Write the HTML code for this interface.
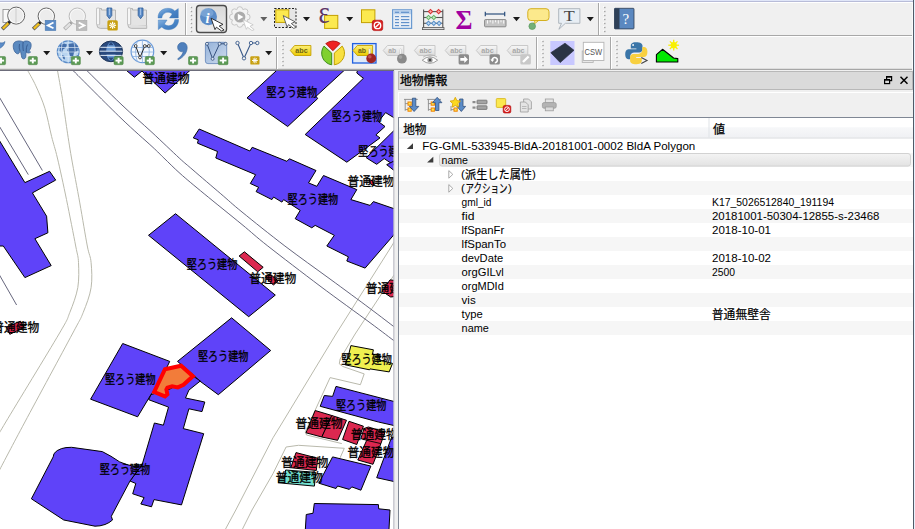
<!DOCTYPE html>
<html><head><meta charset="utf-8"><title>QGIS</title>
<style>
html,body{margin:0;padding:0;background:#f0f0f0;}
body{width:915px;height:529px;overflow:hidden;position:relative;font-family:"Liberation Sans",sans-serif;}
svg{position:absolute;left:0;top:0;display:block}
svg{font-family:"Liberation Sans",sans-serif;}
.serif{font-family:"Liberation Serif",serif;}
.jp{font-family:"Liberation Sans","Noto Sans CJK JP",sans-serif;}
</style></head><body>
<svg width="915" height="529" viewBox="0 0 915 529">
<defs><clipPath id="mapclip"><rect x="0" y="70.5" width="393.5" height="460"/></clipPath></defs>
<rect x="0" y="70" width="394" height="459" fill="#fff"/>
<g clip-path="url(#mapclip)">
<path d="M27.4,70 C28.8,72.6 32.9,79.4 35.8,85.8 C38.7,92.2 42.3,99.8 44.9,108.3 C47.5,116.8 49.5,128.2 51.6,136.5 C53.7,144.8 54.9,147.5 57.4,158 C59.9,168.5 63.5,184.9 66.5,199.6 C69.5,214.3 73.7,235.5 75.7,246 C77.7,256.5 78.2,255.7 78.5,262.6 C78.8,269.5 79.2,279.3 77.8,287.6 C76.3,295.9 72.9,304.8 69.8,312.5 C66.7,320.2 69.7,315.8 59,334 C48.3,352.2 15.8,405.3 5.8,422 C-4.2,438.7 0.1,432.0 -1,434" fill="none" stroke="#b9b9ac" stroke-width="1"/>
<path d="M57.4,70 C58.2,74.7 60.9,88.9 62.4,98.3 C63.9,107.7 65.0,116.5 66.5,126.5 C68.0,136.4 69.3,145.3 71.5,158 C73.7,170.7 77.2,188.2 79.8,202.9 C82.4,217.6 85.4,236.1 87.3,246 C89.2,255.9 90.5,255.7 91.1,262.6 C91.7,269.5 92.4,279.3 91.1,287.6 C89.8,295.9 86.3,304.8 83.2,312.5 C80.1,320.2 82.0,315.8 72.3,334 C62.6,352.2 37.1,399.2 24.9,422 C12.7,444.8 3.3,462.8 -1,471" fill="none" stroke="#b9b9ac" stroke-width="1"/>
<polyline points="395,240.5 391.7,246 336,334 282.7,422 273,437.8 235.8,510 225,530" fill="none" stroke="#b9b9ac" stroke-width="1"/>
<polyline points="395,273.5 355.1,334 340.1,359 339.3,363.9 342.6,366.4 364.2,373.9 360.4,384.7 330.1,377.6 305.2,432 306.5,435 341.8,443.6" fill="none" stroke="#b9b9ac" stroke-width="1"/>
<polyline points="340.1,457.8 344.3,448.3 298.5,445.3 286.1,447 273,473.6 252,510 242,530" fill="none" stroke="#b9b9ac" stroke-width="1"/>
<path d="M71.5,69 C79.8,77.2 107.6,105.3 121,118.2 C134.4,131.1 144.8,139.9 152,146.5 C159.2,153.1 159.2,153.5 163.9,158 C168.6,162.5 173.3,167.4 180,173.4 C186.7,179.4 193.9,185.3 204.2,193.8 C214.5,202.3 231.4,215.8 242,224.5 C252.6,233.2 254.8,235.8 267.8,246 C280.8,256.2 303.0,273.2 320,286 C337.0,298.8 357.5,313.4 370,322.7 C382.5,331.9 390.8,338.4 395,341.5" fill="none" stroke="#55556e" stroke-width="0.9"/>
<path d="M85.3,69 C91.2,74.8 109.9,93.5 121,104.1 C132.1,114.7 142.3,123.4 152,132.4 C161.7,141.4 172.4,151.7 179.2,158 C186.0,164.3 186.1,164.0 193,170 C199.9,176.0 212.6,186.8 220.8,193.8 C229.0,200.8 231.3,203.3 242,212 C252.7,220.7 270.2,234.8 284.9,246 C299.6,257.2 315.8,268.6 330,279 C344.2,289.4 359.2,300.4 370,308.5 C380.8,316.6 390.8,324.3 395,327.5" fill="none" stroke="#55556e" stroke-width="0.9"/>
<polyline points="-1,96.6 42.4,170.5" fill="none" stroke="#55556e" stroke-width="0.9"/>
<polyline points="-1,125.7 28.3,174.6" fill="none" stroke="#55556e" stroke-width="0.9"/>
<polyline points="-1,274.2 16.6,305" fill="none" stroke="#55556e" stroke-width="0.9"/>
<polygon points="120,65 134.4,77.2 142,71 165.1,93 196,65" fill="#5f43f9" stroke="#000" stroke-width="1.0" stroke-linejoin="miter" />
<polygon points="-2,138.2 24.9,182.6 49.6,171.3 55.7,180.1 32.4,192.9 46.6,216.2 47.9,232.8 34.9,238.7 51.2,265.6 24.9,277.6 3.3,246 -2,246" fill="#5f43f9" stroke="#000" stroke-width="1.0" stroke-linejoin="miter" />
<polygon points="199.2,129 249.9,151 252.2,147.3 286.9,161.3 289.4,158.8 316,170.5 308.5,182.9 316.8,186.3 323.5,175.5 356.8,189.6 350.9,199.6 370.1,205.4 373.4,201.6 395,209 395,233.5 384.2,246 365.1,268.1 346.8,261 348.4,256.8 326.8,246 334.3,235.3 315.2,225.4 311.8,227.8 295.2,218.7 300.2,210.4 283.6,199.6 281.9,202.1 273.6,197.1 271.9,199.6 256.1,191.6 258.6,187.3 250.3,183.5 255.6,174.7 215.8,158 217.5,151.5 197.5,143.2 198.3,139.8 193.3,137.9" fill="#5f43f9" stroke="#000" stroke-width="1.0" stroke-linejoin="miter" />
<polygon points="281.4,66 247,97.9 287.7,126.5 317.7,98.6 316,96.3 349,66" fill="#5f43f9" stroke="#000" stroke-width="1.0" stroke-linejoin="miter" />
<polygon points="358.6,66 356.8,73 363.4,78.3 305.2,134.5 346.8,162.2 380,137.9 375.9,134.9 385,126.5 378.4,121.6 385.6,112.6 396,119 396,66" fill="#5f43f9" stroke="#000" stroke-width="1.0" stroke-linejoin="miter" />
<polygon points="396,128.5 366.3,157.8 376.7,164.3 384.2,158.6 396,166.5" fill="#5f43f9" stroke="#000" stroke-width="1.0" stroke-linejoin="miter" />
<polygon points="386.7,164.7 396,172 396,160" fill="#5f43f9" stroke="#000" stroke-width="1.0" stroke-linejoin="miter" />
<polygon points="175.5,213.7 275.3,295.1 248.7,316.7 148.5,235.3" fill="#5f43f9" stroke="#000" stroke-width="1.0" stroke-linejoin="miter" />
<polygon points="239.1,256 244.4,251.8 263.2,267.3 257.7,271.8" fill="#dc2850" stroke="#000" stroke-width="1.0" stroke-linejoin="miter" />
<polygon points="265.5,277.2 270.1,273.9 278,280.9 273.4,285.1" fill="#dc2850" stroke="#000" stroke-width="1.0" stroke-linejoin="miter" />
<polygon points="382.2,291.3 390,279.9 396,280.6 396,296.4 390.7,297" fill="#dc2850" stroke="#000" stroke-width="1.0" stroke-linejoin="miter" />
<polygon points="369.2,179.6 373,181 374.2,185.4 371,184.5" fill="#dc2850" stroke="#000" stroke-width="1.0" stroke-linejoin="miter" />
<polygon points="6.6,327.1 20.3,321.2 24.3,327.4 9.8,334.3" fill="#dc2850" stroke="#000" stroke-width="1.0" stroke-linejoin="miter" />
<polygon points="231.6,317.8 270.7,350.5 218.3,394.7 199.2,380.6 194.2,375.6 177.5,361.4" fill="#5f43f9" stroke="#000" stroke-width="1.0" stroke-linejoin="miter" />
<polygon points="122.7,343.5 169.7,361.4 168,365 165,371 153,392 150.9,394.7 137.6,416.8 90.6,399.2" fill="#5f43f9" stroke="#000" stroke-width="1.0" stroke-linejoin="miter" />
<polygon points="151,394.6 148.7,399.7 168.5,407.1 163.4,425.2 154.4,423 142.2,464.4 130,481 135.8,483.5 132.7,493.8 144.1,497.6 140.8,504 151.5,506.8 154,499.6 181.5,504.9 203.7,433.7 183.3,428.6 188.9,408.8 202,411.6 204.8,402 185.5,398 188.9,390.1 200.3,381 193,376 170,389" fill="#5f43f9" stroke="#000" stroke-width="1.0" stroke-linejoin="miter" />
<polygon points="53.2,456.9 54,453.6 57.2,450.6 61.5,448.6 66,447.6 71.5,447.3 102.3,451.6 111,456.3 119.7,461.9 126.5,464.5 133,466.1 142.2,464.4 130,481 111.3,516.3 112.5,520 109,522.6 105,524.5 100,525.8 95,526.2 63.75,520 31.4,498.8" fill="#5f43f9" stroke="#000" stroke-width="1.0" stroke-linejoin="miter" />
<polygon points="165,369.2 181.1,365.7 192.9,376.3 183.5,384.8 177.8,387.4 172.1,386.2 167.4,387.6 166.4,389.5 167.4,394.2 165,396.4 154.2,392" fill="#f27c3a" stroke="#ff0000" stroke-width="4" stroke-linejoin="miter" stroke-linejoin="round"/>
<polygon points="350.9,345.6 373.4,349.8 372.5,354 380,356 379,360 392.5,363.4 389.2,371.9 370,368.9 369.5,369.8 345.1,364.8 348.4,355.6" fill="#f0f050" stroke="#000" stroke-width="1.0" stroke-linejoin="miter" />
<polygon points="336,386.4 396,402 396,426 378.4,422 320.2,406.3 324.3,395.5 332.6,396.4" fill="#5f43f9" stroke="#000" stroke-width="1.0" stroke-linejoin="miter" />
<polygon points="315.2,410.5 331.8,415.5 321.8,437 306,432.8" fill="#dc2850" stroke="#000" stroke-width="1.0" stroke-linejoin="miter" />
<polygon points="331.8,415.5 346.5,420.3 337.6,440.3 321.8,437" fill="#dc2850" stroke="#000" stroke-width="1.0" stroke-linejoin="miter" />
<polygon points="349,421.3 363.4,426.2 356.8,444.5 342.6,439.5" fill="#dc2850" stroke="#000" stroke-width="1.0" stroke-linejoin="miter" />
<polygon points="368.4,427 385,432 380.9,443.6 373,464.3 357.8,460 366.7,440.3 360.9,438.6 364,428.5" fill="#dc2850" stroke="#000" stroke-width="1.0" stroke-linejoin="miter" />
<polyline points="380.9,443.6 366.7,440.3" fill="none" stroke="#000" stroke-width="0.9"/>
<polygon points="296,452.6 317.7,458.2 316.3,470.5 290.8,467.7" fill="#dc2850" stroke="#000" stroke-width="1.0" stroke-linejoin="miter" />
<polygon points="285.6,470 315.8,472.4 314.4,486.1 278.5,482.8 279.5,478 284.5,478.5" fill="#70e0d0" stroke="#000" stroke-width="1.0" stroke-linejoin="miter" />
<polygon points="332.6,456.9 370.9,466.1 360.9,490.2 351.8,486.9 349.3,489.4 337.6,486 336,488.5 318.8,483.2" fill="#5f43f9" stroke="#000" stroke-width="1.0" stroke-linejoin="miter" />
<polygon points="391.7,437 396,438 396,482 376.7,477.7" fill="#5f43f9" stroke="#000" stroke-width="1.0" stroke-linejoin="miter" />
<polygon points="314.3,503.5 378.4,504.6 378.7,508.8 390,510 388.7,535 305,535 306.25,514.5 313,513.25" fill="#5f43f9" stroke="#000" stroke-width="1.0" stroke-linejoin="miter" />
<g class="jp" font-size="12" fill="#000" stroke="#000" stroke-width="0.3">
<text x="142.5" y="83.08" textLength="47" lengthAdjust="spacingAndGlyphs">普通建物</text>
<text x="266.5" y="96.68" textLength="50.5" lengthAdjust="spacingAndGlyphs">堅ろう建物</text>
<text x="331.7" y="121.08" textLength="50.5" lengthAdjust="spacingAndGlyphs">堅ろう建物</text>
<text x="358.3" y="155.78" textLength="50.5" lengthAdjust="spacingAndGlyphs">堅ろう建物</text>
<text x="347.5" y="186.38" textLength="47" lengthAdjust="spacingAndGlyphs">普通建物</text>
<text x="287.6" y="203.68" textLength="50.5" lengthAdjust="spacingAndGlyphs">堅ろう建物</text>
<text x="186.8" y="269.28" textLength="50.5" lengthAdjust="spacingAndGlyphs">堅ろう建物</text>
<text x="249.3" y="283.48" textLength="47" lengthAdjust="spacingAndGlyphs">普通建物</text>
<text x="365.8" y="293.48" textLength="47" lengthAdjust="spacingAndGlyphs">普通建物</text>
<text x="-7.8" y="332.08" textLength="47" lengthAdjust="spacingAndGlyphs">普通建物</text>
<text x="105" y="384.28" textLength="50.5" lengthAdjust="spacingAndGlyphs">堅ろう建物</text>
<text x="197.9" y="361.08" textLength="50.5" lengthAdjust="spacingAndGlyphs">堅ろう建物</text>
<text x="341.3" y="364.28" textLength="50.5" lengthAdjust="spacingAndGlyphs">堅ろう建物</text>
<text x="335.9" y="410.48" textLength="50.5" lengthAdjust="spacingAndGlyphs">堅ろう建物</text>
<text x="295.4" y="428.28" textLength="47" lengthAdjust="spacingAndGlyphs">普通建物</text>
<text x="350.8" y="439.48" textLength="47" lengthAdjust="spacingAndGlyphs">普通建物</text>
<text x="347.5" y="456.98" textLength="47" lengthAdjust="spacingAndGlyphs">普通建物</text>
<text x="281.3" y="467.28" textLength="47" lengthAdjust="spacingAndGlyphs">普通建物</text>
<text x="275.7" y="482.48" textLength="47" lengthAdjust="spacingAndGlyphs">普通建物</text>
<text x="99.7" y="474.28" textLength="50.5" lengthAdjust="spacingAndGlyphs">堅ろう建物</text>
</g>
</g>
<rect x="393.5" y="70.5" width="1" height="460" fill="#9a9aa8"/>
<rect x="0" y="0" width="915" height="70" fill="#f0f0f0"/>
<rect x="394.5" y="70" width="521" height="459" fill="#f0f0f0"/>
<rect x="0" y="0" width="915" height="1" fill="#e0e6f8"/>
<rect x="0" y="1" width="915" height="1" fill="#b8bcd8"/>
<rect x="0" y="2" width="915" height="1" fill="#fff"/>
<rect x="0" y="35" width="913" height="1" fill="#a8a8a8"/><rect x="0" y="36" width="913" height="1" fill="#fff"/>
<rect x="0" y="68" width="913" height="1" fill="#dedede"/><rect x="0" y="69" width="913" height="1" fill="#a6a6a6"/><rect x="0" y="70" width="394" height="1" fill="#6c6c7a"/>
<rect x="185" y="3" width="1" height="32" fill="#a8a8a8"/><rect x="186" y="3" width="1" height="32" fill="#fff"/>
<rect x="190" y="6" width="1.4" height="1.4" fill="#fff"/><rect x="190.8" y="6.8" width="1.4" height="1.4" fill="#a0a0a0"/><rect x="190" y="10" width="1.4" height="1.4" fill="#fff"/><rect x="190.8" y="10.8" width="1.4" height="1.4" fill="#a0a0a0"/><rect x="190" y="14" width="1.4" height="1.4" fill="#fff"/><rect x="190.8" y="14.8" width="1.4" height="1.4" fill="#a0a0a0"/><rect x="190" y="18" width="1.4" height="1.4" fill="#fff"/><rect x="190.8" y="18.8" width="1.4" height="1.4" fill="#a0a0a0"/><rect x="190" y="22" width="1.4" height="1.4" fill="#fff"/><rect x="190.8" y="22.8" width="1.4" height="1.4" fill="#a0a0a0"/><rect x="190" y="26" width="1.4" height="1.4" fill="#fff"/><rect x="190.8" y="26.8" width="1.4" height="1.4" fill="#a0a0a0"/><rect x="190" y="30" width="1.4" height="1.4" fill="#fff"/><rect x="190.8" y="30.8" width="1.4" height="1.4" fill="#a0a0a0"/>
<rect x="598" y="3" width="1" height="32" fill="#a8a8a8"/><rect x="599" y="3" width="1" height="32" fill="#fff"/>
<rect x="603.3" y="6" width="1.4" height="1.4" fill="#fff"/><rect x="604.0999999999999" y="6.8" width="1.4" height="1.4" fill="#a0a0a0"/><rect x="603.3" y="10" width="1.4" height="1.4" fill="#fff"/><rect x="604.0999999999999" y="10.8" width="1.4" height="1.4" fill="#a0a0a0"/><rect x="603.3" y="14" width="1.4" height="1.4" fill="#fff"/><rect x="604.0999999999999" y="14.8" width="1.4" height="1.4" fill="#a0a0a0"/><rect x="603.3" y="18" width="1.4" height="1.4" fill="#fff"/><rect x="604.0999999999999" y="18.8" width="1.4" height="1.4" fill="#a0a0a0"/><rect x="603.3" y="22" width="1.4" height="1.4" fill="#fff"/><rect x="604.0999999999999" y="22.8" width="1.4" height="1.4" fill="#a0a0a0"/><rect x="603.3" y="26" width="1.4" height="1.4" fill="#fff"/><rect x="604.0999999999999" y="26.8" width="1.4" height="1.4" fill="#a0a0a0"/><rect x="603.3" y="30" width="1.4" height="1.4" fill="#fff"/><rect x="604.0999999999999" y="30.8" width="1.4" height="1.4" fill="#a0a0a0"/>
<rect x="276" y="37" width="1" height="32" fill="#a8a8a8"/><rect x="277" y="37" width="1" height="32" fill="#fff"/>
<rect x="281.5" y="40" width="1.4" height="1.4" fill="#fff"/><rect x="282.3" y="40.8" width="1.4" height="1.4" fill="#a0a0a0"/><rect x="281.5" y="44" width="1.4" height="1.4" fill="#fff"/><rect x="282.3" y="44.8" width="1.4" height="1.4" fill="#a0a0a0"/><rect x="281.5" y="48" width="1.4" height="1.4" fill="#fff"/><rect x="282.3" y="48.8" width="1.4" height="1.4" fill="#a0a0a0"/><rect x="281.5" y="52" width="1.4" height="1.4" fill="#fff"/><rect x="282.3" y="52.8" width="1.4" height="1.4" fill="#a0a0a0"/><rect x="281.5" y="56" width="1.4" height="1.4" fill="#fff"/><rect x="282.3" y="56.8" width="1.4" height="1.4" fill="#a0a0a0"/><rect x="281.5" y="60" width="1.4" height="1.4" fill="#fff"/><rect x="282.3" y="60.8" width="1.4" height="1.4" fill="#a0a0a0"/><rect x="281.5" y="64" width="1.4" height="1.4" fill="#fff"/><rect x="282.3" y="64.8" width="1.4" height="1.4" fill="#a0a0a0"/>
<rect x="536" y="37" width="1" height="32" fill="#a8a8a8"/><rect x="537" y="37" width="1" height="32" fill="#fff"/>
<rect x="541.5" y="40" width="1.4" height="1.4" fill="#fff"/><rect x="542.3" y="40.8" width="1.4" height="1.4" fill="#a0a0a0"/><rect x="541.5" y="44" width="1.4" height="1.4" fill="#fff"/><rect x="542.3" y="44.8" width="1.4" height="1.4" fill="#a0a0a0"/><rect x="541.5" y="48" width="1.4" height="1.4" fill="#fff"/><rect x="542.3" y="48.8" width="1.4" height="1.4" fill="#a0a0a0"/><rect x="541.5" y="52" width="1.4" height="1.4" fill="#fff"/><rect x="542.3" y="52.8" width="1.4" height="1.4" fill="#a0a0a0"/><rect x="541.5" y="56" width="1.4" height="1.4" fill="#fff"/><rect x="542.3" y="56.8" width="1.4" height="1.4" fill="#a0a0a0"/><rect x="541.5" y="60" width="1.4" height="1.4" fill="#fff"/><rect x="542.3" y="60.8" width="1.4" height="1.4" fill="#a0a0a0"/><rect x="541.5" y="64" width="1.4" height="1.4" fill="#fff"/><rect x="542.3" y="64.8" width="1.4" height="1.4" fill="#a0a0a0"/>
<rect x="610" y="37" width="1" height="32" fill="#a8a8a8"/><rect x="611" y="37" width="1" height="32" fill="#fff"/>
<rect x="615.5" y="40" width="1.4" height="1.4" fill="#fff"/><rect x="616.3" y="40.8" width="1.4" height="1.4" fill="#a0a0a0"/><rect x="615.5" y="44" width="1.4" height="1.4" fill="#fff"/><rect x="616.3" y="44.8" width="1.4" height="1.4" fill="#a0a0a0"/><rect x="615.5" y="48" width="1.4" height="1.4" fill="#fff"/><rect x="616.3" y="48.8" width="1.4" height="1.4" fill="#a0a0a0"/><rect x="615.5" y="52" width="1.4" height="1.4" fill="#fff"/><rect x="616.3" y="52.8" width="1.4" height="1.4" fill="#a0a0a0"/><rect x="615.5" y="56" width="1.4" height="1.4" fill="#fff"/><rect x="616.3" y="56.8" width="1.4" height="1.4" fill="#a0a0a0"/><rect x="615.5" y="60" width="1.4" height="1.4" fill="#fff"/><rect x="616.3" y="60.8" width="1.4" height="1.4" fill="#a0a0a0"/><rect x="615.5" y="64" width="1.4" height="1.4" fill="#fff"/><rect x="616.3" y="64.8" width="1.4" height="1.4" fill="#a0a0a0"/>
<rect x="3" y="9.5" width="6" height="13" fill="#fafafa" stroke="#888" stroke-width="0.8"/>
<line x1="9" y1="22.6" x2="2.2" y2="29.2" stroke="#555" stroke-width="3.8" stroke-linecap="butt"/><line x1="8.7" y1="22.900000000000002" x2="2.8000000000000003" y2="28.599999999999998" stroke="#f0c020" stroke-width="2.3"/><circle cx="9.5" cy="22.1" r="1.6" fill="#222"/><circle cx="16.2" cy="15.6" r="8.5" fill="#ececec" stroke="#666" stroke-width="1"/><circle cx="16.2" cy="15.6" r="7.3" fill="none" stroke="#fff" stroke-width="1" opacity="0.8"/>
<line x1="16" y1="8" x2="16" y2="23" stroke="#bbb" stroke-width="0.6"/>
<line x1="39.6" y1="23" x2="33.2" y2="29.2" stroke="#555" stroke-width="3.8" stroke-linecap="butt"/><line x1="39.300000000000004" y1="23.3" x2="33.800000000000004" y2="28.599999999999998" stroke="#f0c020" stroke-width="2.3"/><circle cx="40.1" cy="22.5" r="1.6" fill="#222"/><circle cx="46.3" cy="16.2" r="8.2" fill="#ececec" stroke="#666" stroke-width="1"/><circle cx="46.3" cy="16.2" r="6.999999999999999" fill="none" stroke="#fff" stroke-width="1" opacity="0.8"/>
<rect x="45.2" y="20.3" width="10.6" height="10.2" fill="#5b8cc8" stroke="#4a78b0" stroke-width="0.6"/>
<polyline points="53.5,22.5 47.8,25.4 53.5,28.3" fill="none" stroke="#fff" stroke-width="1.8"/>
<g opacity="0.75"><line x1="70.8" y1="23" x2="64.4" y2="29.2" stroke="#999" stroke-width="3.8" stroke-linecap="butt"/><line x1="70.5" y1="23.3" x2="65.0" y2="28.599999999999998" stroke="#ddd" stroke-width="2.3"/><circle cx="71.3" cy="22.5" r="1.6" fill="#888"/><circle cx="77.3" cy="16.2" r="8.2" fill="#ececec" stroke="#aaa" stroke-width="1"/><circle cx="77.3" cy="16.2" r="6.999999999999999" fill="none" stroke="#fff" stroke-width="1" opacity="0.8"/></g>
<rect x="76.3" y="20.3" width="10.6" height="10.2" fill="#bcbcbc" stroke="#aaa" stroke-width="0.6"/>
<polyline points="78.7,22.5 84.4,25.4 78.7,28.3" fill="none" stroke="#fff" stroke-width="1.8"/>
<path d="M97.5,8.5 h2 v17 h16 v-15.5 h-14 v-1.5 z" fill="#e4e4e4" stroke="#aaa" stroke-width="0.8"/><path d="M96.5,8.3 q1.7,-0.8 3.2,0 v16 q-1.5,0.8 -3.2,0 z" fill="#f6f6f6" stroke="#b0b0b0" stroke-width="0.7"/><path d="M96.8,24.6 q0,3.8 3.6,3.8 h15.3 v-3" fill="#e0e0e0" stroke="#aaa" stroke-width="0.8"/>
<path d="M107,8 h4.8 v7.5 l-2.4,3.2 l-2.4,-3.2 z" fill="#5b8cc8" stroke="#2e5a94" stroke-width="0.8"/><line x1="109.4" y1="8.5" x2="109.4" y2="15" stroke="#a8c4e8" stroke-width="1"/>
<rect x="107.4" y="20.2" width="10.4" height="10.2" rx="1.5" fill="#c8a010"/>
<g stroke="#fff" stroke-width="1.2"><line x1="112.6" y1="21.8" x2="112.6" y2="28.8"/><line x1="109.1" y1="25.3" x2="116.1" y2="25.3"/><line x1="110.1" y1="22.8" x2="115.1" y2="27.8"/><line x1="115.1" y1="22.8" x2="110.1" y2="27.8"/></g><circle cx="112.6" cy="25.3" r="1.3" fill="#f8e8a0"/>
<path d="M128.5,8.5 h2 v17 h16 v-15.5 h-14 v-1.5 z" fill="#e4e4e4" stroke="#aaa" stroke-width="0.8"/><path d="M127.5,8.3 q1.7,-0.8 3.2,0 v16 q-1.5,0.8 -3.2,0 z" fill="#f6f6f6" stroke="#b0b0b0" stroke-width="0.7"/><path d="M127.8,24.6 q0,3.8 3.6,3.8 h15.3 v-3" fill="#e0e0e0" stroke="#aaa" stroke-width="0.8"/>
<path d="M138.2,8 h4.8 v7.5 l-2.4,3.2 l-2.4,-3.2 z" fill="#5b8cc8" stroke="#2e5a94" stroke-width="0.8"/><line x1="140.6" y1="8.5" x2="140.6" y2="15" stroke="#a8c4e8" stroke-width="1"/>
<defs><linearGradient id="rf" x1="0" y1="0" x2="1" y2="1"><stop offset="0" stop-color="#8cb6e2"/><stop offset="0.5" stop-color="#4a86c8"/><stop offset="1" stop-color="#3a74b8"/></linearGradient></defs><g fill="url(#rf)" stroke="#3f78b8" stroke-width="0.4"><path d="M158,18 C158,11 163,8.3 168,8.3 C171,8.3 173.5,9.5 174.8,11 L178.3,8.6 L178.3,18 L169.5,18 L172.2,14 C171,12.8 169.5,12.3 168,12.3 C165,12.3 162.5,14 161.8,18 Z"/><path d="M178.6,19.5 C178.6,26.5 173.6,29.7 168.6,29.7 C165.6,29.7 163.1,28.5 161.8,27 L158.3,29.6 L158.3,20 L167.1,20 L164.4,24 C165.6,25.2 167.1,25.7 168.6,25.7 C171.6,25.7 174.1,24 174.8,19.5 Z"/></g>
<defs><linearGradient id="pressed" x1="0" y1="0" x2="0" y2="1"><stop offset="0" stop-color="#d8d8d8"/><stop offset="0.5" stop-color="#e2e2e2"/><stop offset="1" stop-color="#ececec"/></linearGradient></defs>
<rect x="196.5" y="5.5" width="30" height="27" rx="3.2" fill="url(#pressed)" stroke="#4c4c4c" stroke-width="1.4"/>
<circle cx="208.5" cy="16.7" r="8.5" fill="#5b8cc8"/><ellipse cx="207" cy="12.9" rx="6.5" ry="4.5" fill="#8ab0dc" opacity="0.6"/>
<text x="205.6" y="22.6" class="serif" font-style="italic" font-weight="bold" font-size="14.5" fill="#fff">i</text>
<path transform="translate(211.1,18.2) scale(1.0)" d="M0,0 L11.9,6.2 L8.1,7.9 L13,11.8 L10.5,12.8 L5.3,9 L3.9,11.4 Z" fill="#fff" stroke="#222" stroke-width="0.9" stroke-linejoin="round"/>
<circle cx="247.20" cy="17.00" r="2.9" fill="#f3f3f3" stroke="#c6c6c6" stroke-width="1"/><circle cx="245.03" cy="22.23" r="2.9" fill="#f3f3f3" stroke="#c6c6c6" stroke-width="1"/><circle cx="239.80" cy="24.40" r="2.9" fill="#f3f3f3" stroke="#c6c6c6" stroke-width="1"/><circle cx="234.57" cy="22.23" r="2.9" fill="#f3f3f3" stroke="#c6c6c6" stroke-width="1"/><circle cx="232.40" cy="17.00" r="2.9" fill="#f3f3f3" stroke="#c6c6c6" stroke-width="1"/><circle cx="234.57" cy="11.77" r="2.9" fill="#f3f3f3" stroke="#c6c6c6" stroke-width="1"/><circle cx="239.80" cy="9.60" r="2.9" fill="#f3f3f3" stroke="#c6c6c6" stroke-width="1"/><circle cx="245.03" cy="11.77" r="2.9" fill="#f3f3f3" stroke="#c6c6c6" stroke-width="1"/><circle cx="239.8" cy="17" r="7.7" fill="#f3f3f3"/>
<circle cx="239.8" cy="17" r="5.6" fill="#ababab"/><polygon points="237.8,13.8 243.4,17 237.8,20.2" fill="#fff"/>
<path transform="translate(243,19.5) scale(0.86)" d="M0,0 L11.9,6.2 L8.1,7.9 L13,11.8 L10.5,12.8 L5.3,9 L3.9,11.4 Z" fill="#fff" stroke="#c4c4c4" stroke-width="0.9" stroke-linejoin="round"/>
<polygon points="260.3,17 267.3,17 263.8,21.3" fill="#606060"/>
<rect x="274.5" y="8.5" width="21.5" height="19" fill="#e6e6e6" stroke="#222" stroke-width="1" stroke-dasharray="2,1.5"/>
<rect x="275.8" y="9.8" width="13" height="12.6" fill="#fce94f" stroke="#c4a000" stroke-width="1"/>
<path transform="translate(283.2,15.6) scale(1.0)" d="M0,0 L11.9,6.2 L8.1,7.9 L13,11.8 L10.5,12.8 L5.3,9 L3.9,11.4 Z" fill="#fff" stroke="#555" stroke-width="0.9" stroke-linejoin="round"/>
<polygon points="303,17 310,17 306.5,21.3" fill="#1a1a1a"/>
<rect x="324.6" y="15.4" width="13.2" height="13" fill="#fce94f" stroke="#c4a000" stroke-width="1"/>
<text transform="translate(318.6,23.3) scale(0.86,1)" class="serif" font-size="31" fill="#5c3566">ε</text>
<polygon points="346.2,17 353.2,17 349.7,21.3" fill="#1a1a1a"/>
<rect x="361.5" y="9.8" width="13.4" height="12.8" fill="#fce94f" stroke="#c4a000" stroke-width="1"/>
<rect x="372.3" y="20.2" width="10.4" height="10.4" rx="2.08" fill="#d82020" stroke="#b00000" stroke-width="0.6"/><circle cx="377.5" cy="25.4" r="3.224" fill="none" stroke="#fff" stroke-width="1.352"/><line x1="375.316" y1="27.584" x2="379.684" y2="23.215999999999998" stroke="#fff" stroke-width="1.352"/>
<rect x="392.6" y="9.8" width="19" height="18.6" fill="#e8eef6" stroke="#6a9ad0" stroke-width="1.2"/><rect x="393.2" y="10.4" width="17.8" height="3.8" fill="#b8d0ec"/>
<g stroke="#5b8cc8" stroke-width="1.1"><line x1="395" y1="12.3" x2="399" y2="12.3"/><line x1="401" y1="12.3" x2="409" y2="12.3"/><line x1="395" y1="16.6" x2="399" y2="16.6"/><line x1="401" y1="16.6" x2="409.3" y2="16.6"/><line x1="395" y1="19.6" x2="399" y2="19.6"/><line x1="401" y1="19.6" x2="409.3" y2="19.6"/><line x1="395" y1="22.6" x2="399" y2="22.6"/><line x1="401" y1="22.6" x2="409.3" y2="22.6"/><line x1="395" y1="25.6" x2="399" y2="25.6"/><line x1="401" y1="25.6" x2="409.3" y2="25.6"/></g>
<g stroke="#555" stroke-width="1.1"><line x1="423.6" y1="9.4" x2="423.6" y2="28"/><line x1="442.8" y1="9.4" x2="442.8" y2="28"/><line x1="423.6" y1="11.6" x2="442.8" y2="11.6"/><line x1="423.6" y1="17.5" x2="442.8" y2="17.5"/><line x1="423.6" y1="23.3" x2="442.8" y2="23.3"/></g>
<rect x="422.4" y="27.6" width="21.6" height="2" fill="#ddd" stroke="#555" stroke-width="0.8"/>
<rect x="429.0" y="10.1" width="3" height="3" transform="rotate(45 430.5 11.6)" fill="#f8b0b0" stroke="#d83030" stroke-width="1"/><rect x="437.1" y="10.1" width="3" height="3" transform="rotate(45 438.6 11.6)" fill="#f8b0b0" stroke="#d83030" stroke-width="1"/>
<rect x="427.0" y="16.0" width="3" height="3" transform="rotate(45 428.5 17.5)" fill="#c8ecc8" stroke="#60b060" stroke-width="1"/><rect x="432.3" y="16.0" width="3" height="3" transform="rotate(45 433.8 17.5)" fill="#c8ecc8" stroke="#60b060" stroke-width="1"/>
<rect x="427.0" y="21.8" width="3" height="3" transform="rotate(45 428.5 23.3)" fill="#c0dcf4" stroke="#5b90c8" stroke-width="1"/><rect x="432.3" y="21.8" width="3" height="3" transform="rotate(45 433.8 23.3)" fill="#c0dcf4" stroke="#5b90c8" stroke-width="1"/><rect x="437.6" y="21.8" width="3" height="3" transform="rotate(45 439.1 23.3)" fill="#c0dcf4" stroke="#5b90c8" stroke-width="1"/>
<text x="455.6" y="28.6" class="serif" font-weight="bold" font-size="27.5" fill="#a000a0" textLength="17" lengthAdjust="spacingAndGlyphs">Σ</text>
<g stroke="#2c4f7c" stroke-width="1.2"><line x1="485" y1="14" x2="505" y2="14"/><line x1="485.3" y1="11.8" x2="485.3" y2="16.2"/><line x1="504.7" y1="11.8" x2="504.7" y2="16.2"/></g>
<rect x="484.6" y="19.6" width="21.4" height="7.2" rx="0.8" fill="#c4c4c4" stroke="#808080" stroke-width="0.9"/>
<g stroke="#fff" stroke-width="0.9"><line x1="487.5" y1="20.2" x2="487.5" y2="23.6"/><line x1="490.2" y1="20.2" x2="490.2" y2="22.3"/><line x1="492.9" y1="20.2" x2="492.9" y2="23.6"/><line x1="495.6" y1="20.2" x2="495.6" y2="22.3"/><line x1="498.3" y1="20.2" x2="498.3" y2="23.6"/><line x1="501" y1="20.2" x2="501" y2="22.3"/><line x1="503.7" y1="20.2" x2="503.7" y2="23.6"/></g>
<polygon points="513,17 520,17 516.5,21.3" fill="#1a1a1a"/>
<path d="M535.5,20 L532.5,25.5 L539,20.2 Z" fill="#fce98c" stroke="#d4b020" stroke-width="0.9"/>
<rect x="527.8" y="8.7" width="21.2" height="11.8" rx="3" fill="#fce98c" stroke="#d4b020" stroke-width="1"/>
<circle cx="532.2" cy="26.2" r="3.3" fill="#73b078" stroke="#5a9a60" stroke-width="0.7"/>
<path d="M558.7,8.7 h21.2 v14.6 h-14.5 l-6.5,6 l2.6,-6 h-2.8 z" fill="#e8eef4" stroke="#a8b0b8" stroke-width="0.9"/>
<text x="563.8" y="21.2" class="serif" font-size="15.5" fill="#444" textLength="11" lengthAdjust="spacingAndGlyphs">T</text>
<polygon points="586.8,17 593.8,17 590.3,21.3" fill="#1a1a1a"/>
<rect x="614.5" y="8.3" width="19.5" height="20.6" rx="0.8" fill="#5b88c0" stroke="#2e3c50" stroke-width="0.8"/><rect x="614.5" y="8.3" width="5" height="20.6" fill="#2e4057"/>
<text x="622.6" y="24.3" class="serif" font-size="15" fill="#fff">?</text>
<path d="M-2,42 Q3,44 5,41.5 Q4,47 -2,49 Z" fill="#5b8cc8" stroke="#3a68a0" stroke-width="0.6"/>
<rect x="-3.6" y="56.5" width="9.2" height="8.2" rx="1.2" fill="#5c9a55" stroke="#4a8445" stroke-width="0.5"/><line x1="0.9999999999999996" y1="57.8" x2="0.9999999999999996" y2="63.400000000000006" stroke="#fff" stroke-width="1.9"/><line x1="-2.1" y1="60.6" x2="4.1" y2="60.6" stroke="#fff" stroke-width="1.9"/>
<g fill="#5b8ac0" stroke="#3a6298" stroke-width="0.8"><path d="M15,42 C12.5,43.5 12.8,48.5 15,52 C16.5,54 18.2,54.3 19.2,53 L19.6,49.5 C21,51.5 21,54.5 21.8,57.5 C22.3,59.3 25,59.3 25.6,57.6 C26.2,55.5 25.5,53.6 26.3,52.2 C27.5,53.2 29.5,53.2 30.6,52 C29.3,52 28.7,51.4 29.5,50.2 C31.5,47.5 31.8,43.5 29.8,42 C27.5,40.5 24.5,40.8 23.2,42 C21,40.6 17.2,40.6 15,42 Z"/></g>
<path d="M19.5,44 C19,47 19.3,49 19.6,49.5 M23.2,42 C22.6,45 23,49 23.4,51 M26.3,52.2 C26,49 26.6,46 27.6,44.5" fill="none" stroke="#2e5288" stroke-width="0.8"/>
<rect x="28.2" y="56.5" width="9.2" height="8.2" rx="1.2" fill="#5c9a55" stroke="#4a8445" stroke-width="0.5"/><line x1="32.8" y1="57.8" x2="32.8" y2="63.400000000000006" stroke="#fff" stroke-width="1.9"/><line x1="29.7" y1="60.6" x2="35.9" y2="60.6" stroke="#fff" stroke-width="1.9"/>
<polygon points="43.2,51 50.2,51 46.7,55.3" fill="#1a1a1a"/>
<circle cx="68.2" cy="51.8" r="10.9" fill="#b8d4f0" stroke="#5b8cc8" stroke-width="1.1"/>
<g fill="#3e6aa8" opacity="0.95"><path d="M60,45 l4,-1.5 l3,1 l-1,3 l-3,2 l-1,3.5 l-2.5,-2 z"/><path d="M68,44 l6,-1 l4,3.5 l-0.5,4.5 l-3.5,1.5 l-1,4 l-2.5,1 l-1.5,-5 l-2,-2 l1.5,-3.5 z"/><path d="M62,55 l2.5,1 l0.5,3.5 l-2,-1 z"/><path d="M76,56 l2,-1 l-0.5,3 z"/></g>
<g stroke="#e6f0fa" stroke-width="0.7" fill="none" opacity="0.9"><line x1="57" y1="47.5" x2="79.5" y2="47.5"/><line x1="57" y1="52" x2="79.5" y2="52"/><line x1="58.5" y1="56.5" x2="78" y2="56.5"/><line x1="68.2" y1="40" x2="68.2" y2="62.8"/><path d="M63,40.5 q-3.5,11 0,21.8 M73.4,40.5 q3.5,11 0,21.8"/></g>
<rect x="71.2" y="56.5" width="9.2" height="8.2" rx="1.2" fill="#5c9a55" stroke="#4a8445" stroke-width="0.5"/><line x1="75.8" y1="57.8" x2="75.8" y2="63.400000000000006" stroke="#fff" stroke-width="1.9"/><line x1="72.7" y1="60.6" x2="78.9" y2="60.6" stroke="#fff" stroke-width="1.9"/>
<polygon points="86,51 93,51 89.5,55.3" fill="#1a1a1a"/>
<ellipse cx="111" cy="51.4" rx="11.6" ry="10.3" fill="#2a4a7e" stroke="#1e3558" stroke-width="1"/>
<path d="M111,41.5 C104.5,45 104.5,58 111,61.3 C117.5,58 117.5,45 111,41.5 Z" fill="#6a9ad4"/>
<path d="M111,41.5 L108.3,45.3 L113.7,45.3 Z M111,61.3 L108.3,57.6 L113.7,57.6 Z" fill="#2a4a7e"/>
<rect x="104.5" y="51.3" width="13" height="3.2" fill="#2a4a7e"/>
<g stroke="#dfe9f6" stroke-width="1"><line x1="100.3" y1="47.3" x2="121.7" y2="47.3"/><line x1="99.5" y1="51.2" x2="122.5" y2="51.2"/><line x1="100.3" y1="55.4" x2="121.7" y2="55.4"/></g>
<rect x="114" y="56.5" width="9.2" height="8.2" rx="1.2" fill="#5c9a55" stroke="#4a8445" stroke-width="0.5"/><line x1="118.6" y1="57.8" x2="118.6" y2="63.400000000000006" stroke="#fff" stroke-width="1.9"/><line x1="115.5" y1="60.6" x2="121.7" y2="60.6" stroke="#fff" stroke-width="1.9"/>
<circle cx="142.4" cy="51.4" r="11.3" fill="#f4f8fd" stroke="#6a9ad8" stroke-width="1.2"/>
<g stroke="#8ab0e0" stroke-width="0.8" fill="none"><line x1="131.5" y1="47.5" x2="153.3" y2="47.5"/><line x1="131.3" y1="52" x2="153.5" y2="52"/><line x1="132.5" y1="56.5" x2="152.3" y2="56.5"/><line x1="142.4" y1="40" x2="142.4" y2="62.8"/><path d="M137.5,40.8 q-4,10.6 0,21.2 M147.3,40.8 q4,10.6 0,21.2"/></g>
<polyline points="135.7,46 140,57.5 144.8,46 148.8,46" fill="none" stroke="#222" stroke-width="1"/>
<circle cx="135.7" cy="46" r="1.4" fill="#fff" stroke="#222" stroke-width="0.8"/>
<circle cx="140" cy="57.5" r="1.4" fill="#fff" stroke="#222" stroke-width="0.8"/>
<circle cx="144.8" cy="46" r="1.4" fill="#fff" stroke="#222" stroke-width="0.8"/>
<circle cx="148.8" cy="46" r="1.4" fill="#fff" stroke="#222" stroke-width="0.8"/>
<rect x="145.2" y="56.5" width="9.2" height="8.2" rx="1.2" fill="#5c9a55" stroke="#4a8445" stroke-width="0.5"/><line x1="149.79999999999998" y1="57.8" x2="149.79999999999998" y2="63.400000000000006" stroke="#fff" stroke-width="1.9"/><line x1="146.7" y1="60.6" x2="152.89999999999998" y2="60.6" stroke="#fff" stroke-width="1.9"/>
<polygon points="160.2,51 167.2,51 163.7,55.3" fill="#1a1a1a"/>
<path d="M182.4,42.5 C185.3,42.5 187.2,44.6 187.2,47.6 C187.2,52.5 183.5,57.5 178.2,59.8 L177.7,58.8 C181.3,56.5 183,53.5 183.2,51.3 C182.8,51.6 182.3,51.7 181.7,51.7 C179.3,51.7 177.6,49.8 177.6,47.3 C177.6,44.6 179.7,42.5 182.4,42.5 Z" fill="#4f80bd" stroke="#3a68a0" stroke-width="0.6"/>
<rect x="188.5" y="56.5" width="9.2" height="8.2" rx="1.2" fill="#5c9a55" stroke="#4a8445" stroke-width="0.5"/><line x1="193.1" y1="57.8" x2="193.1" y2="63.400000000000006" stroke="#fff" stroke-width="1.9"/><line x1="190.0" y1="60.6" x2="196.2" y2="60.6" stroke="#fff" stroke-width="1.9"/>
<defs><linearGradient id="lb" x1="0" y1="0" x2="1" y2="1"><stop offset="0" stop-color="#94b2da"/><stop offset="1" stop-color="#cfdcee"/></linearGradient></defs>
<rect x="205.4" y="42.3" width="21.3" height="21.3" rx="2.5" fill="url(#lb)" stroke="#6c8cbc" stroke-width="0.9"/>
<polyline points="207,43.8 212.6,58.8 219.6,43.8 226,43.8" fill="none" stroke="#34507c" stroke-width="1"/>
<circle cx="207" cy="43.8" r="1.5" fill="#dfe8f4" stroke="#34507c" stroke-width="0.8"/>
<circle cx="212.6" cy="58.8" r="1.5" fill="#dfe8f4" stroke="#34507c" stroke-width="0.8"/>
<circle cx="219.6" cy="43.8" r="1.5" fill="#dfe8f4" stroke="#34507c" stroke-width="0.8"/>
<circle cx="225.6" cy="43.8" r="1.5" fill="#dfe8f4" stroke="#34507c" stroke-width="0.8"/>
<rect x="218.2" y="56.3" width="9.8" height="8.4" rx="1.2" fill="#5c9a55" stroke="#4a8445" stroke-width="0.5"/><line x1="223.1" y1="57.599999999999994" x2="223.1" y2="63.400000000000006" stroke="#fff" stroke-width="1.9"/><line x1="219.7" y1="60.5" x2="226.5" y2="60.5" stroke="#fff" stroke-width="1.9"/>
<polyline points="237.5,43 244,58.3 251,43 257.3,43" fill="none" stroke="#3a5a8a" stroke-width="1.1"/>
<circle cx="237.5" cy="43" r="1.7" fill="#f4f4f4" stroke="#3a5a8a" stroke-width="0.9"/>
<circle cx="244" cy="58.3" r="1.7" fill="#f4f4f4" stroke="#3a5a8a" stroke-width="0.9"/>
<circle cx="251" cy="43" r="1.7" fill="#f4f4f4" stroke="#3a5a8a" stroke-width="0.9"/>
<circle cx="257.3" cy="43" r="1.7" fill="#f4f4f4" stroke="#3a5a8a" stroke-width="0.9"/>
<rect x="250.3" y="56.3" width="9.2" height="8.3" rx="1.2" fill="#c8a010"/><g stroke="#fff" stroke-width="1"><line x1="254.9" y1="57.6" x2="254.9" y2="63.3"/><line x1="252" y1="60.45" x2="257.8" y2="60.45"/><line x1="252.8" y1="58.4" x2="257" y2="62.5"/><line x1="257" y1="58.4" x2="252.8" y2="62.5"/></g>
<polygon points="265.2,51 272.2,51 268.7,55.3" fill="#1a1a1a"/>
<defs><linearGradient id="yt" x1="0" y1="0" x2="0" y2="1"><stop offset="0" stop-color="#fdf07a"/><stop offset="1" stop-color="#eccb00"/></linearGradient><linearGradient id="gt" x1="0" y1="0" x2="0" y2="1"><stop offset="0" stop-color="#f6f6f6"/><stop offset="1" stop-color="#dcdcdc"/></linearGradient></defs>
<path d="M290.3,50.5 L294.6,45.5 H310.90000000000003 V55.5 H294.6 Z" fill="url(#yt)" stroke="#c4a000" stroke-width="0.9"/><text x="295.3" y="53.3" font-size="8" font-weight="bold" fill="#6e6410" textLength="12.4" lengthAdjust="spacingAndGlyphs">abc</text>
<path d="M331.7,53.1 L324,46.1 A11.8,11.8 0 0 0 331.7,64.8 Z" fill="#80d030" stroke="#3c8c1c" stroke-width="1"/>
<path d="M334.3,53.1 L342.2,46.1 A11.8,11.8 0 0 1 334.3,64.8 Z" fill="#f8e040" stroke="#c0a000" stroke-width="1"/>
<path d="M332.9,50.7 L325.8,43.6 A11.6,11.6 0 0 1 340.1,43.4 Z" fill="#ee2222" stroke="#b01010" stroke-width="0.9"/>
<rect x="352.6" y="43.6" width="23.4" height="19.4" fill="#e0eaf6" stroke="#2060e0" stroke-width="1.3"/>
<path d="M353,50.5 L357.3,45.5 H372.6 V55.5 H357.3 Z" fill="url(#yt)" stroke="#c4a000" stroke-width="0.9"/><text x="358" y="53.3" font-size="8" font-weight="bold" fill="#6e6410" textLength="8" lengthAdjust="spacingAndGlyphs">ab</text>
<path d="M368.8,49.5 q0.9,-1.6 1.8,0 v6 h-1.8 z" fill="#fff" stroke="#aaa" stroke-width="0.5"/>
<circle cx="371.2" cy="58.4" r="4.9" fill="#a02424"/><circle cx="369.8" cy="56.8" r="1.8" fill="#c86060" opacity="0.8"/>
<path d="M383.2,50.5 L387.5,45.5 H403.8 V55.5 H387.5 Z" fill="url(#gt)" stroke="#c4c4c4" stroke-width="0.9"/><text x="388.2" y="53.3" font-size="8" font-weight="bold" fill="#a8a8a8" textLength="8" lengthAdjust="spacingAndGlyphs">ab</text>
<path d="M399.8,49.5 q0.9,-1.6 1.8,0 v6 h-1.8 z" fill="#fff" stroke="#bbb" stroke-width="0.5"/><circle cx="401.9" cy="58.7" r="4.9" fill="#8a8a8a"/><circle cx="400.5" cy="57.1" r="1.8" fill="#aaa" opacity="0.8"/>
<path d="M414.4,50.5 L418.7,45.5 H435.0 V55.5 H418.7 Z" fill="url(#gt)" stroke="#c4c4c4" stroke-width="0.9"/><text x="419.4" y="53.3" font-size="8" font-weight="bold" fill="#a8a8a8" textLength="12.4" lengthAdjust="spacingAndGlyphs">abc</text>
<path d="M422.2,60.2 Q430,53.5 437.6,60.2 Q430,66.5 422.2,60.2 Z" fill="#fff" stroke="#888" stroke-width="0.8"/><circle cx="430" cy="60" r="2.6" fill="#999"/><circle cx="430" cy="60" r="1.2" fill="#444"/><path d="M423,57.2 Q430,52.3 437,57" fill="none" stroke="#aaa" stroke-width="0.7"/>
<path d="M445.2,50.5 L449.5,45.5 H465.8 V55.5 H449.5 Z" fill="url(#gt)" stroke="#c4c4c4" stroke-width="0.9"/><text x="450.2" y="53.3" font-size="8" font-weight="bold" fill="#a8a8a8" textLength="12.4" lengthAdjust="spacingAndGlyphs">abc</text>
<rect x="458.6" y="54.3" width="10.4" height="10.2" rx="1.5" fill="#8c8c8c"/><path d="M460.3,58 h4 v-2.2 l3.6,3.6 l-3.6,3.6 v-2.2 h-4 z" fill="#fff"/>
<path d="M476.3,50.5 L480.6,45.5 H496.90000000000003 V55.5 H480.6 Z" fill="url(#gt)" stroke="#c4c4c4" stroke-width="0.9"/><text x="481.3" y="53.3" font-size="8" font-weight="bold" fill="#a8a8a8" textLength="12.4" lengthAdjust="spacingAndGlyphs">abc</text>
<rect x="489.5" y="54.3" width="10.4" height="10.2" rx="1.5" fill="#8c8c8c"/><path d="M492.2,60.5 a2.6,2.6 0 1 1 2.6,2.2" fill="none" stroke="#fff" stroke-width="1.6"/><path d="M490.4,59.5 l2,2.6 l1.9,-2.6 z" fill="#fff"/>
<path d="M507.2,50.5 L511.5,45.5 H527.8 V55.5 H511.5 Z" fill="url(#gt)" stroke="#c4c4c4" stroke-width="0.9"/><text x="512.2" y="53.3" font-size="8" font-weight="bold" fill="#a8a8a8" textLength="12.4" lengthAdjust="spacingAndGlyphs">abc</text>
<rect x="520.3" y="54.3" width="10.6" height="10.2" rx="1.5" fill="#c8c8c8"/><line x1="523" y1="62" x2="528.6" y2="56.5" stroke="#fff" stroke-width="2.4"/>
<rect x="550.3" y="41" width="24.2" height="24" fill="#c8c8ff"/><polygon points="550.8,52.7 565,43.2 574,50.3 560.2,62.6" fill="#2a3444" stroke="#1c2430" stroke-width="0.6"/>
<rect x="582.2" y="51" width="11" height="11.5" fill="#e8e8e8" stroke="#b0b0b0" stroke-width="0.8"/>
<rect x="583.3" y="42.3" width="20.6" height="18.2" fill="#fff" stroke="#b4b4b4" stroke-width="0.9"/>
<text x="584.6" y="55.3" font-size="9.6" fill="#555" textLength="17.6" lengthAdjust="spacingAndGlyphs">CSW</text>
<path d="M636,42.2 c-4.5,0 -5.2,2 -5.2,3.6 v2.6 h5.6 v0.9 h-8 c-2.2,0 -3.2,2.3 -3.2,5 c0,2.8 1,5 3,5 h2.1 v-3 c0,-2.3 1.8,-3.8 4,-3.8 h5 c1.9,0 3.2,-1.4 3.2,-3.2 v-3.6 c0,-1.9 -1.8,-3.5 -6.5,-3.5 z" fill="#3a75a8"/>
<circle cx="633.1" cy="45" r="0.9" fill="#fff"/>
<path d="M636.6,64.2 c4.5,0 5.2,-2 5.2,-3.6 v-2.6 h-5.6 v-0.9 h8 c2.2,0 3.2,-2.3 3.2,-5 c0,-2.8 -1,-5 -3,-5 h-2.1 v3 c0,2.3 -1.8,3.8 -4,3.8 h-5 c-1.9,0 -3.2,1.4 -3.2,3.2 v3.6 c0,1.9 1.8,3.5 6.5,3.5 z" fill="#f8d040"/>
<polyline points="641.3,57.6 647,60.6 641.3,63.6" fill="none" stroke="#444" stroke-width="1.1"/>
<g stroke="#f8f000" stroke-width="1.3"><line x1="673.7" y1="39.8" x2="673.7" y2="50.6"/><line x1="668.3" y1="45.2" x2="679.1" y2="45.2"/><line x1="669.9" y1="41.4" x2="677.5" y2="49"/><line x1="677.5" y1="41.4" x2="669.9" y2="49"/></g><circle cx="673.7" cy="45.2" r="3.1" fill="#f8f000"/>
<path d="M656.4,62 V54.6 L662.5,49.3 L673.6,58 L677.8,58.6 V62 Z" fill="#00e800" stroke="#000" stroke-width="1.1" stroke-linejoin="round"/>
<rect x="398.5" y="71.5" width="514" height="18" fill="#dadada" stroke="#b8b8b8" stroke-width="1"/>
<text class="jp" x="400" y="84.98" font-size="12" fill="#000" stroke="#000" stroke-width="0.3" textLength="47.5" lengthAdjust="spacingAndGlyphs">地物情報</text>
<g fill="none" stroke="#000" stroke-width="1.2"><rect x="886.6" y="76.6" width="5" height="4"/><rect x="884.6" y="79.6" width="5" height="4" fill="#dadada"/><line x1="886.6" y1="77" x2="891.6" y2="77"/><line x1="884.6" y1="80" x2="889.6" y2="80"/></g>
<g stroke="#000" stroke-width="1.5"><line x1="900.5" y1="76.8" x2="907.5" y2="83.8"/><line x1="907.5" y1="76.8" x2="900.5" y2="83.8"/></g>
<rect x="398" y="92" width="515" height="1" fill="#fff"/><rect x="398" y="92" width="1" height="25" fill="#fff"/>
<g stroke="#8a8a8a" stroke-width="0.9" fill="none"><line x1="404" y1="99.4" x2="417.8" y2="99.4"/><line x1="405.2" y1="99.4" x2="405.2" y2="110.8"/><line x1="405.2" y1="103.6" x2="408" y2="103.6"/><line x1="405.2" y1="109.6" x2="408" y2="109.6"/></g><rect x="408" y="102" width="3.2" height="3.2" fill="#fce94f" stroke="#f08000" stroke-width="1"/><rect x="408" y="108" width="3.2" height="3.2" fill="#fce94f" stroke="#f08000" stroke-width="1"/>
<path d="M412.4,98.2 h3.4 v8.2 h3 l-4.7,5.1 l-4.7,-5.1 h3 z" fill="#5b8cc8" stroke="#34507c" stroke-width="0.8"/>
<g stroke="#8a8a8a" stroke-width="0.9" fill="none"><line x1="427.2" y1="99.4" x2="441.0" y2="99.4"/><line x1="428.4" y1="99.4" x2="428.4" y2="110.8"/><line x1="428.4" y1="103.6" x2="431.2" y2="103.6"/><line x1="428.4" y1="109.6" x2="431.2" y2="109.6"/></g><rect x="431.2" y="102" width="3.2" height="3.2" fill="#fce94f" stroke="#f08000" stroke-width="1"/><rect x="431.2" y="108" width="3.2" height="3.2" fill="#fce94f" stroke="#f08000" stroke-width="1"/>
<path d="M435.5,110.5 h3.4 v-7.8 h3 l-4.7,-5.4 l-4.7,5.4 h3 z" fill="#5b8cc8" stroke="#34507c" stroke-width="0.8"/>
<g stroke="#8a8a8a" stroke-width="0.9"><line x1="451" y1="106" x2="451" y2="111"/><line x1="451" y1="109.6" x2="454" y2="109.6"/></g><rect x="454" y="108" width="3.2" height="3.2" fill="#fce94f" stroke="#f08000" stroke-width="1"/>
<path d="M459.6,99 h3.4 v7.4 h2.6 l-4.3,5.1 l-4.3,-5.1 h2.6 z" fill="#5b8cc8" stroke="#34507c" stroke-width="0.8"/>
<path d="M455.3,97.3 l1.6,3.3 l3.6,0.5 l-2.6,2.5 l0.6,3.6 l-3.2,-1.7 l-3.2,1.7 l0.6,-3.6 l-2.6,-2.5 l3.6,-0.5 z" fill="#fcd820" stroke="#d8a000" stroke-width="0.8"/>
<g fill="#8c8c8c"><rect x="472.5" y="101" width="3" height="2.2"/><rect x="472.5" y="106.5" width="3" height="2.2"/><rect x="477" y="100.2" width="10" height="3.6" rx="0.6" fill="#a4a4a4" stroke="#6c6c6c" stroke-width="0.8"/><rect x="477" y="105.8" width="10" height="3.6" rx="0.6" fill="#a4a4a4" stroke="#6c6c6c" stroke-width="0.8"/></g>
<rect x="496.3" y="98.6" width="9.4" height="8.8" rx="0.8" fill="#fce94f" stroke="#d8b820" stroke-width="0.9"/>
<rect x="503.2" y="105.4" width="7.6" height="7.6" rx="1.52" fill="#d82020" stroke="#b00000" stroke-width="0.6"/><circle cx="507.0" cy="109.2" r="2.356" fill="none" stroke="#fff" stroke-width="0.988"/><line x1="505.404" y1="110.796" x2="508.596" y2="107.604" stroke="#fff" stroke-width="0.988"/>
<g fill="#e4e4e4" stroke="#a4a4a4" stroke-width="0.9"><path d="M523.6,99 h5 l2.8,2.8 v7.2 h-7.8 z"/><path d="M520.4,102 h5 l2.8,2.8 v7.2 h-7.8 z"/></g><g stroke="#a8a8a8" stroke-width="0.7"><line x1="522" y1="106.5" x2="526.5" y2="106.5"/><line x1="522" y1="108.5" x2="526.5" y2="108.5"/></g>
<g fill="#b4b4b4" stroke="#9c9c9c" stroke-width="0.8"><rect x="545.3" y="99" width="8" height="4" fill="#e4e4e4"/><rect x="542.4" y="102.6" width="13.8" height="5.6" rx="1.6"/><rect x="545.3" y="107" width="8" height="3.8" fill="#dcdcdc"/></g>
<rect x="398.5" y="117.5" width="515" height="412" fill="#fff" stroke="#7f8794" stroke-width="1"/>
<defs><linearGradient id="hdr" x1="0" y1="0" x2="0" y2="1"><stop offset="0" stop-color="#fff"/><stop offset="0.45" stop-color="#fff"/><stop offset="0.5" stop-color="#f6f7f9"/><stop offset="1" stop-color="#f0f1f4"/></linearGradient><linearGradient id="hov" x1="0" y1="0" x2="0" y2="1"><stop offset="0" stop-color="#f4f4f4"/><stop offset="1" stop-color="#e2e2e2"/></linearGradient></defs>
<rect x="399" y="118" width="514" height="19.5" fill="url(#hdr)"/><rect x="399" y="137.5" width="514" height="1" fill="#d8dadd"/><rect x="708.5" y="118" width="1" height="19.5" fill="#e0e3e8"/>
<text class="jp" x="403.2" y="133.68" font-size="12" fill="#000" stroke="#000" stroke-width="0.25" textLength="23.3" lengthAdjust="spacingAndGlyphs">地物</text>
<text class="jp" x="713" y="133.68" font-size="12" fill="#000" stroke="#000" stroke-width="0.25">値</text>
<rect x="399" y="153" width="514" height="14" fill="#f6f6f6"/>
<rect x="399" y="181" width="514" height="14" fill="#f6f6f6"/>
<rect x="399" y="209" width="514" height="14" fill="#f6f6f6"/>
<rect x="399" y="237" width="514" height="14" fill="#f6f6f6"/>
<rect x="399" y="265" width="514" height="14" fill="#f6f6f6"/>
<rect x="399" y="293" width="514" height="14" fill="#f6f6f6"/>
<rect x="399" y="321" width="514" height="14" fill="#f6f6f6"/>
<rect x="439.5" y="153.5" width="471" height="12.6" rx="2.5" fill="url(#hov)" stroke="#d2d2d2" stroke-width="1"/>
<polygon points="413.0,143.2 413.0,149.0 406.8,149.0" fill="#3c3c3c"/>
<polygon points="433.3,156.8 433.3,162.60000000000002 427.1,162.60000000000002" fill="#3c3c3c"/>
<polygon points="448.8,170.6 452.8,174.4 448.8,178.2" fill="#fff" stroke="#a0a0a0" stroke-width="0.9"/>
<polygon points="448.8,184.6 452.8,188.4 448.8,192.2" fill="#fff" stroke="#a0a0a0" stroke-width="0.9"/>
<text x="422.3" y="150" font-size="11.6" fill="#000" textLength="273" lengthAdjust="spacingAndGlyphs">FG-GML-533945-BldA-20181001-0002 BldA Polygon</text>
<text x="441.5" y="164" font-size="11.6" fill="#000" textLength="26.5" lengthAdjust="spacingAndGlyphs">name</text>
<text x="461.6" y="206" font-size="11.6" fill="#000" textLength="29.9" lengthAdjust="spacingAndGlyphs">gml_id</text>
<text x="461.6" y="220" font-size="11.6" fill="#000" textLength="12.8" lengthAdjust="spacingAndGlyphs">fid</text>
<text x="461.6" y="234" font-size="11.6" fill="#000" textLength="42.7" lengthAdjust="spacingAndGlyphs">lfSpanFr</text>
<text x="461.6" y="248" font-size="11.6" fill="#000" textLength="44.4" lengthAdjust="spacingAndGlyphs">lfSpanTo</text>
<text x="461.6" y="262" font-size="11.6" fill="#000" textLength="41.6" lengthAdjust="spacingAndGlyphs">devDate</text>
<text x="461.6" y="276" font-size="11.6" fill="#000" textLength="42.2" lengthAdjust="spacingAndGlyphs">orgGILvl</text>
<text x="461.6" y="290" font-size="11.6" fill="#000" textLength="42.2" lengthAdjust="spacingAndGlyphs">orgMDId</text>
<text x="461.6" y="304" font-size="11.6" fill="#000" textLength="14.1" lengthAdjust="spacingAndGlyphs">vis</text>
<text x="461.6" y="318" font-size="11.6" fill="#000" textLength="21.2" lengthAdjust="spacingAndGlyphs">type</text>
<text x="461.6" y="332" font-size="11.6" fill="#000" textLength="27.2" lengthAdjust="spacingAndGlyphs">name</text>
<text x="461" y="178" font-size="11.6">(</text>
<text class="jp" x="465" y="178.88" font-size="12" fill="#000" stroke="#000" stroke-width="0.2" textLength="67" lengthAdjust="spacingAndGlyphs">派生した属性</text>
<text x="532" y="178" font-size="11.6">)</text>
<text x="461" y="192" font-size="11.6">(</text>
<text class="jp" x="465.5" y="192.68" font-size="12" fill="#000" stroke="#000" stroke-width="0.2" textLength="42" lengthAdjust="spacingAndGlyphs">アクション</text>
<text x="508" y="192" font-size="11.6">)</text>
<text x="712" y="206" font-size="11.6" fill="#000" textLength="122" lengthAdjust="spacingAndGlyphs">K17_5026512840_191194</text>
<text x="712" y="220" font-size="11.6" fill="#000" textLength="167.4" lengthAdjust="spacingAndGlyphs">20181001-50304-12855-s-23468</text>
<text x="712" y="234" font-size="11.6" fill="#000" textLength="59" lengthAdjust="spacingAndGlyphs">2018-10-01</text>
<text x="712" y="262" font-size="11.6" fill="#000" textLength="59" lengthAdjust="spacingAndGlyphs">2018-10-02</text>
<text x="712" y="276" font-size="11.6" fill="#000" textLength="23" lengthAdjust="spacingAndGlyphs">2500</text>
<text class="jp" x="711.8" y="318.58" font-size="12" fill="#000" stroke="#000" stroke-width="0.2" textLength="59" lengthAdjust="spacingAndGlyphs">普通無壁舎</text>
<rect x="912" y="2" width="1" height="68" fill="#fafafa"/><rect x="913" y="0" width="1" height="529" fill="#505a68"/><rect x="914" y="0" width="1" height="529" fill="#e8f0fc"/>
</svg>
</body></html>
